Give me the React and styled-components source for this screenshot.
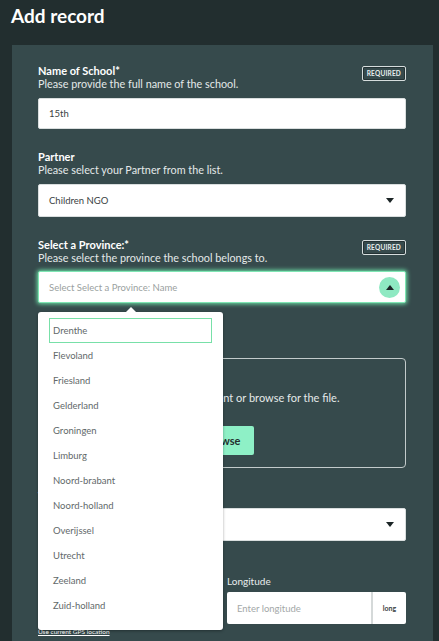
import React from 'react';
import styled, { createGlobalStyle } from 'styled-components';

const provinces = [
    'Drenthe', 'Flevoland', 'Friesland', 'Gelderland', 'Groningen', 'Limburg',
    'Noord-brabant', 'Noord-holland', 'Overijssel', 'Utrecht', 'Zeeland', 'Zuid-holland'
];

const GlobalStyle = createGlobalStyle`
    body {
        margin: 0;
        background: #222e2f;
        font-family: 'Lato', 'Noto Sans', sans-serif;
        overflow: hidden;
    }
`

const Page = styled.div`
    width: 439px;
    height: 641px;
    overflow: hidden;
`

const Title = styled.h1`
    margin: 0;
    height: 45px;
    padding: 4px 0 0 11px;
    box-sizing: border-box;
    color: #ffffff;
    font-size: 19px;
    font-weight: 700;
`

const Card = styled.div`
    margin-left: 12px;
    width: 421px;
    min-height: 620px;
    box-sizing: border-box;
    background: #364a4c;
    padding: 19px 27px 0 26px;
`

const Field = styled.div`
    position: relative;
    margin-bottom: ${p => p.$gap || 21}px;
`

const LabelRow = styled.div`
    display: flex;
    justify-content: space-between;
    align-items: flex-start;
    margin-bottom: ${p => p.$space || 8}px;
`

const Label = styled.div`
    color: #ffffff;
    font-size: 11px;
    font-weight: 700;
    line-height: 13px;
`

const Description = styled.div`
    color: #e4e9e9;
    font-size: 10.8px;
    line-height: 13px;
`

const Badge = styled.span`
    margin-top: 2px;
    padding: 3px 4px 3px;
    border: 1.5px solid #d6dddd;
    border-radius: 2px;
    box-shadow: inset 0 0 0 1px #243234;
    color: #e8eded;
    font-size: 6.5px;
    font-weight: 700;
    letter-spacing: 0.2px;
`

const Input = styled.div`
    display: flex;
    align-items: center;
    justify-content: space-between;
    height: ${p => p.$h || 32}px;
    box-sizing: border-box;
    padding: 0 10px;
    background: #ffffff;
    border: 1px solid ${p => (p.$focus ? '#7fe6b4' : '#d9dede')};
    border-radius: 2px;
    box-shadow: ${p => (p.$focus ? '0 0 4px 1px #6fe0a8' : 'none')};
    color: ${p => (p.$placeholder ? '#9a9fa0' : '#3a4243')};
    font-size: 9.5px;
`

const Caret = styled.span`
    width: 0;
    height: 0;
    border-left: 4px solid transparent;
    border-right: 4px solid transparent;
    border-${p => (p.$up ? 'bottom' : 'top')}: 5px solid #1c2526;
    margin-right: ${p => p.$mr || 0}px;
`

const RoundButton = styled.span`
    display: flex;
    align-items: center;
    justify-content: center;
    width: 21px;
    height: 21px;
    margin-right: -5px;
    border-radius: 50%;
    background: #8ee9c2;
`

const Dropdown = styled.div`
    position: absolute;
    left: 0;
    top: ${p => p.$top}px;
    width: 185px;
    box-sizing: border-box;
    padding: 6px 11px 12px;
    background: #ffffff;
    border-radius: 3px;
    box-shadow: 0 1px 3px rgba(0, 0, 0, 0.35);
    z-index: 10;

    &::before {
        content: '';
        position: absolute;
        top: -5px;
        left: 88px;
        border-left: 5px solid transparent;
        border-right: 5px solid transparent;
        border-bottom: 5px solid #ffffff;
    }
`

const Option = styled.div`
    height: 25px;
    display: flex;
    align-items: center;
    box-sizing: border-box;
    padding-left: 3px;
    border: 1px solid ${p => (p.$active ? '#78e0a8' : 'transparent')};
    color: #62696a;
    font-size: 9.5px;
`

const DropZone = styled.div`
    height: 110px;
    box-sizing: border-box;
    padding: 32px 20px 0;
    border: 1.5px solid #c3cbcb;
    border-radius: 4px;
    color: #e4e9e9;
    font-size: 11px;
    text-align: center;
`

const BrowseButton = styled.span`
    display: inline-block;
    margin-top: 22px;
    padding: 8px 14px;
    background: #8ef0c6;
    border-radius: 2px;
    color: #24302f;
    font-size: 11px;
    font-weight: 700;
`

const Columns = styled.div`
    display: grid;
    grid-template-columns: 1fr 1fr;
    gap: 10px;
`

const SmallLabel = styled.div`
    color: #e8eded;
    font-size: 10px;
    margin-bottom: 5px;
`

const InputGroup = styled.div`
    display: flex;
    height: 32px;
    background: #ffffff;
    border-radius: 2px;
    overflow: hidden;
`

const GroupInput = styled.div`
    flex: 1;
    display: flex;
    align-items: center;
    padding-left: 10px;
    color: #a3a8a8;
    font-size: 9.5px;
`

const Addon = styled.div`
    width: 33px;
    display: flex;
    align-items: center;
    justify-content: center;
    border-left: 2px solid #d5d9d9;
    color: #3a4243;
    font-size: 7px;
    font-weight: 700;
`

const GpsLink = styled.a`
    display: block;
    width: fit-content;
    margin-top: 3px;
    color: #ffffff;
    font-size: 6.5px;
    line-height: 9px;
    text-decoration: underline;
`

const App = () => {
    return (
        <Page>
            <GlobalStyle />
            <Title>Add record</Title>
            <Card>
                <Field>
                    <LabelRow>
                        <div>
                            <Label>Name of School*</Label>
                            <Description>Please provide the full name of the school.</Description>
                        </div>
                        <Badge>REQUIRED</Badge>
                    </LabelRow>
                    <Input $h={31}>15th</Input>
                </Field>

                <Field>
                    <LabelRow>
                        <div>
                            <Label>Partner</Label>
                            <Description>Please select your Partner from the list.</Description>
                        </div>
                    </LabelRow>
                    <Input $h={33}>
                        Children NGO
                        <Caret $mr={1} />
                    </Input>
                </Field>

                <Field $gap={21}>
                    <LabelRow $space={7}>
                        <div>
                            <Label>Select a Province:*</Label>
                            <Description>Please select the province the school belongs to.</Description>
                        </div>
                        <Badge>REQUIRED</Badge>
                    </LabelRow>
                    <Input $focus $placeholder>
                        Select Select a Province: Name
                        <RoundButton><Caret $up /></RoundButton>
                    </Input>
                    <Dropdown $top={74}>
                        {provinces.map((name, i) => (
                            <Option key={name} $active={i === 0}>{name}</Option>
                        ))}
                    </Dropdown>
                </Field>

                <Field>
                    <LabelRow>
                        <div>
                            <Label>Photo of the school</Label>
                            <Description>Upload a recent photo.</Description>
                        </div>
                    </LabelRow>
                    <DropZone>
                        Drag and drop a document or browse for the file.
                        <div><BrowseButton>Browse</BrowseButton></div>
                    </DropZone>
                </Field>

                <Field $gap={34}>
                    <LabelRow $space={6}>
                        <Label>Type of school</Label>
                    </LabelRow>
                    <Input $h={33}>
                        Primary
                        <Caret $mr={1} />
                    </Input>
                </Field>

                <Columns>
                    <div>
                        <SmallLabel>Latitude</SmallLabel>
                        <InputGroup>
                            <GroupInput>Enter latitude</GroupInput>
                            <Addon>lat</Addon>
                        </InputGroup>
                    </div>
                    <div>
                        <SmallLabel>Longitude</SmallLabel>
                        <InputGroup>
                            <GroupInput>Enter longitude</GroupInput>
                            <Addon>long</Addon>
                        </InputGroup>
                    </div>
                </Columns>
                <GpsLink>Use current GPS location</GpsLink>
            </Card>
        </Page>
    );
}

export default App;
